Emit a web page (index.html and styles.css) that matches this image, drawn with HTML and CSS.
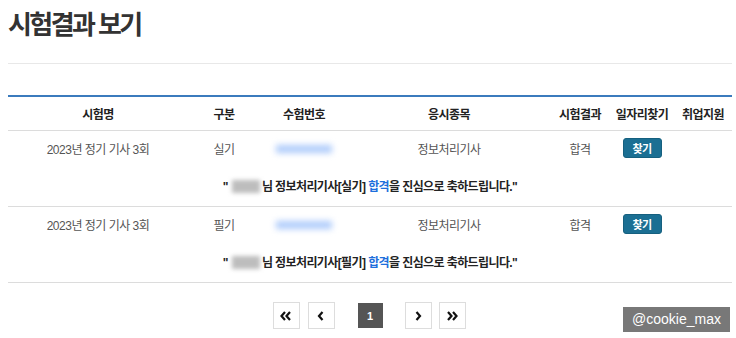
FILE: index.html
```html
<!DOCTYPE html>
<html lang="ko">
<head>
<meta charset="utf-8">
<title>시험결과 보기</title>
<link rel="stylesheet" href="styles.css">
</head>
<body>
<div class="page">
  <h1 class="title">시험결과 보기</h1>
  <div class="divider"></div>
  <table class="result">
    <colgroup>
      <col class="c1"><col class="c2"><col class="c3"><col class="c4"><col class="c5"><col class="c6"><col class="c7">
    </colgroup>
    <thead>
      <tr>
        <th>시험명</th><th>구분</th><th>수험번호</th><th>응시종목</th><th>시험결과</th><th>일자리찾기</th><th>취업지원</th>
      </tr>
    </thead>
    <tbody>
      <tr class="data">
        <td>2023년 정기 기사 3회</td>
        <td>실기</td>
        <td><span class="blur-num"></span></td>
        <td>정보처리기사</td>
        <td>합격</td>
        <td><button class="find">찾기</button></td>
        <td></td>
      </tr>
      <tr class="msg">
        <td colspan="7">"<span class="blur-name"></span>님 정보처리기사[실기] <span class="pass">합격</span>을 진심으로 축하드립니다."</td>
      </tr>
      <tr class="data">
        <td>2023년 정기 기사 3회</td>
        <td>필기</td>
        <td><span class="blur-num"></span></td>
        <td>정보처리기사</td>
        <td>합격</td>
        <td><button class="find">찾기</button></td>
        <td></td>
      </tr>
      <tr class="msg">
        <td colspan="7">"<span class="blur-name"></span>님 정보처리기사[필기] <span class="pass">합격</span>을 진심으로 축하드립니다."</td>
      </tr>
    </tbody>
  </table>
  <nav class="pager">
    <a class="pg first"><svg width="12" height="10" viewBox="0 0 12 10"><path d="M5 1L1.5 5L5 9M10 1L6.5 5L10 9" fill="none" stroke="#111" stroke-width="2.2"/></svg></a>
    <a class="pg prev"><svg width="8" height="10" viewBox="0 0 8 10"><path d="M5.5 1L2 5L5.5 9" fill="none" stroke="#111" stroke-width="2.2"/></svg></a>
    <span class="pg current">1</span>
    <a class="pg next"><svg width="8" height="10" viewBox="0 0 8 10"><path d="M2.5 1L6 5L2.5 9" fill="none" stroke="#111" stroke-width="2.2"/></svg></a>
    <a class="pg last"><svg width="12" height="10" viewBox="0 0 12 10"><path d="M2 1L5.5 5L2 9M7 1L10.5 5L7 9" fill="none" stroke="#111" stroke-width="2.2"/></svg></a>
  </nav>
  <div class="watermark">@cookie_max</div>
</div>
</body>
</html>
```
FILE: styles.css
```css
html, body {
  margin: 0;
  padding: 0;
  background: #fff;
}
body {
  font-family: "Liberation Sans", "Noto Sans CJK KR", sans-serif;
  color: #222;
}
.page {
  position: relative;
  width: 724px;
  padding: 0 4px 0 8px;
  height: 338px;
}
.title {
  margin: 0;
  padding-top: 10px;
  height: 30px;
  font-size: 26px;
  line-height: 30px;
  font-weight: 700;
  color: #333;
  letter-spacing: -2.6px;
}
.divider {
  margin-top: 23px;
  border-top: 1px solid #e8e8e8;
}
.result {
  margin-top: 31px;
  width: 724px;
  border-collapse: collapse;
  table-layout: fixed;
  border-top: 2px solid #3b7bbd;
  font-size: 12px;
  letter-spacing: -0.5px;
}
.c1 { width: 180px; }
.c2 { width: 72px; }
.c3 { width: 88px; }
.c4 { width: 202px; }
.c5 { width: 60px; }
.c6 { width: 64px; }
.c7 { width: 58px; }
.result th {
  height: 33px;
  padding: 0;
  font-weight: 700;
  color: #222;
  text-align: center;
  border-bottom: 1px solid #dcdcdc;
}
.result td {
  padding: 0;
  text-align: center;
  vertical-align: middle;
}
.data td {
  height: 34px;
  color: #555;
}
.msg td {
  height: 41px;
  font-weight: 700;
  color: #222;
  letter-spacing: -0.6px;
  border-bottom: 1px solid #dcdcdc;
}
.pass {
  color: #1e6fdc;
}
.blur-name {
  display: inline-block;
  width: 28px;
  height: 13px;
  margin: 0 2px 0 4px;
  vertical-align: -2px;
  background: #bdbdbd;
  filter: blur(2px);
}
.blur-num {
  display: inline-block;
  width: 56px;
  height: 8px;
  vertical-align: middle;
  background: #aecbfb;
  filter: blur(3px);
}
.find {
  width: 39px;
  height: 20px;
  padding: 0;
  border: 1px solid #16607f;
  border-radius: 3px;
  background: #1b6f93;
  color: #fff;
  font-family: "Noto Sans CJK KR", sans-serif;
  font-size: 11px;
  font-weight: 700;
  letter-spacing: -0.5px;
  line-height: 18px;
  vertical-align: middle;
}
.pager {
  display: flex;
  justify-content: center;
  align-items: center;
  margin-top: 19px;
  padding-right: 2px;
}
.pg {
  box-sizing: border-box;
  width: 27px;
  height: 27px;
  border: 1px solid #dddddd;
  display: flex;
  align-items: center;
  justify-content: center;
  background: #fff;
}
.prev { margin-left: 8px; }
.current {
  width: 25px;
  height: 25px;
  margin-left: 23px;
  border: none;
  background: #555;
  color: #fff;
  font-family: "Liberation Sans", sans-serif;
  font-size: 11px;
  font-weight: 700;
}
.next { margin-left: 22px; }
.last { margin-left: 7px; }
.watermark {
  position: absolute;
  left: 623px;
  top: 307px;
  width: 107px;
  height: 25px;
  background: #787878;
  color: #fff;
  font-family: "Liberation Sans", sans-serif;
  font-size: 14px;
  line-height: 25px;
  text-align: center;
}
```
